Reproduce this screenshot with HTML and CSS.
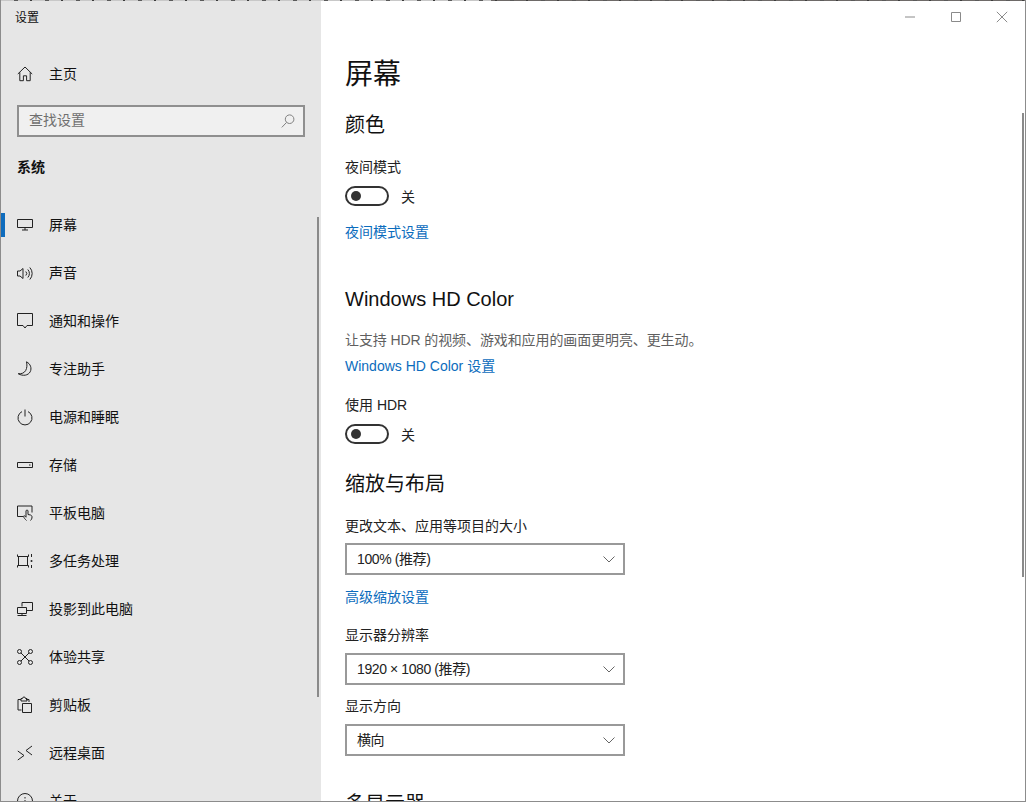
FILE: index.html
```html
<!DOCTYPE html>
<html lang="zh-CN">
<head>
<meta charset="utf-8">
<title>设置</title>
<link rel="stylesheet" href="styles.css">
</head>
<body>
<div class="window">
  <div class="topstrip"></div>
  <div class="body">
    <aside class="sidebar">
      <div class="apptitle">设置</div>
      <div class="nav home">
        <svg class="ico" viewBox="0 0 16 16"><path d="M.8 8 8 1l7.200 7M2.800 6.300v8.400h3.600V9.800h3.200v4.900h3.600V6.300"/></svg>
        <span>主页</span>
      </div>
      <div class="search">
        <span class="search-text">查找设置</span>
        <svg class="search-ico" viewBox="0 0 14 14"><circle cx="8.600" cy="5.200" r="4.300"/><path d="M5.600 8.400.8 13.400"/></svg>
      </div>
      <div class="group">系统</div>
      <nav class="navlist">
        <div class="nav active">
          <svg class="ico" viewBox="0 0 16 16"><path d="M.5 2.500h15v8H.5zM8 10.500v2.500M5 13h6"/></svg>
          <span>屏幕</span>
        </div>
        <div class="nav">
          <svg class="ico" viewBox="0 0 16 16"><path d="M.5 6h2.500L6 3.500v10L3 11H.5zM8.800 6.500a2.800 2.800 0 0 1 0 4M10.800 4.500a5.800 5.800 0 0 1 0 8M12.800 2.500a8.800 8.800 0 0 1 0 12"/></svg>
          <span>声音</span>
        </div>
        <div class="nav">
          <svg class="ico" viewBox="0 0 16 16"><path d="M.5.500h15v12h-5.500L8 15l-2-2.500H.5z"/></svg>
          <span>通知和操作</span>
        </div>
        <div class="nav">
          <svg class="ico" viewBox="0 0 16 16"><path d="M9.500.8c4 2 5.500 6.500 3.700 10-1.900 3.600-7.200 4.700-12 1.900 3.300.3 6-.6 7.500-3.200 1.400-2.500 1.500-5.800.8-8.700z"/></svg>
          <span>专注助手</span>
        </div>
        <div class="nav">
          <svg class="ico" viewBox="0 0 16 16"><path d="M8 .5v7M5 2.600a7 7 0 1 0 6 0"/></svg>
          <span>电源和睡眠</span>
        </div>
        <div class="nav">
          <svg class="ico" viewBox="0 0 16 16"><path d="M.5 5.500h15v5H.5zM12 8h1.500"/></svg>
          <span>存储</span>
        </div>
        <div class="nav">
          <svg class="ico" viewBox="0 0 16 16"><path d="M6 11.500H.5v-10.500h14.500v6.500M9.500 15.500C8 14 7 13 6.500 11.500c0-.8.8-1 1.500-.3l1 1V6c0-1.300 2-1.300 2 0v3.500l2.500.5c1 .3 1.500 1 1.500 2 0 1.500-.5 2.500-1.500 3.500"/></svg>
          <span>平板电脑</span>
        </div>
        <div class="nav">
          <svg class="ico" viewBox="0 0 16 16"><path d="M.5 1.500v2h11v-2M.5 14.500v-2h11v2M1.500 3.500v9M10.500 3.500v9M14.500 1v3M14.500 12v3"/><circle class="dot" cx="14.500" cy="8" r="1"/></svg>
          <span>多任务处理</span>
        </div>
        <div class="nav">
          <svg class="ico" viewBox="0 0 16 16"><path d="M5 5.500V1.500h10.500v8H9M.5 6.500h9v6h-9zM.5 14.500h9M5 12.500v2"/></svg>
          <span>投影到此电脑</span>
        </div>
        <div class="nav">
          <svg class="ico" viewBox="0 0 16 16"><circle cx="2.500" cy="2.500" r="2"/><circle cx="13.500" cy="2.500" r="2"/><circle cx="2.500" cy="13.500" r="2"/><circle cx="13.500" cy="13.500" r="2"/><path d="m4 4 8 8M12 4l-8 8"/></svg>
          <span>体验共享</span>
        </div>
        <div class="nav">
          <svg class="ico" viewBox="0 0 16 16"><path d="M4.500 13H1V2.500h3M9 2.500h3V5M4 1.500h1.500a1 1 0 0 1 3 0H10v2.500H4zM5.500 6.500h9v9h-9z"/></svg>
          <span>剪贴板</span>
        </div>
        <div class="nav">
          <svg class="ico" viewBox="0 0 16 16"><path d="m.8 6 6.200 4.500-6.200 4.500M15 1 9 5.500l6 4.500"/></svg>
          <span>远程桌面</span>
        </div>
        <div class="nav">
          <svg class="ico" viewBox="0 0 16 16"><circle cx="8" cy="8" r="7.500"/><path d="M8 7v5M8 4v1.500"/></svg>
          <span>关于</span>
        </div>
      </nav>
      <div class="scroll-side"></div>
    </aside>
    <main class="content">
      <div class="winctl">
        <svg viewBox="0 0 12 12"><path d="M1 6h10"/></svg>
        <svg viewBox="0 0 12 12"><path d="M1.500 1.500h9v9h-9z"/></svg>
        <svg viewBox="0 0 12 12"><path d="m.8.800 10.400 10.400M11.200.800.800 11.200"/></svg>
      </div>
      <h1 class="title">屏幕</h1>
      <h2 class="sec first">颜色</h2>
      <div class="label lab-night">夜间模式</div>
      <div class="toggle-row">
        <span class="toggle"><i></i></span><span class="toggle-text">关</span>
      </div>
      <a class="link link-night">夜间模式设置</a>
      <h2 class="sec hd">Windows HD Color</h2>
      <p class="label desc">让支持 HDR 的视频、游戏和应用的画面更明亮、更生动。</p>
      <a class="link link-hd">Windows HD Color 设置</a>
      <div class="label lab-hdr">使用 HDR</div>
      <div class="toggle-row">
        <span class="toggle"><i></i></span><span class="toggle-text">关</span>
      </div>
      <h2 class="sec scale">缩放与布局</h2>
      <div class="label lab-size">更改文本、应用等项目的大小</div>
      <div class="select sel-size"><span class="select-text">100% (推荐)</span><svg viewBox="0 0 12 7"><path d="m.5.500 5.500 5.500 5.500-5.500"/></svg></div>
      <a class="link link-adv">高级缩放设置</a>
      <div class="label lab-res">显示器分辨率</div>
      <div class="select sel-res"><span class="select-text">1920 × 1080 (推荐)</span><svg viewBox="0 0 12 7"><path d="m.5.500 5.500 5.500 5.500-5.500"/></svg></div>
      <div class="label lab-dir">显示方向</div>
      <div class="select sel-dir"><span class="select-text">横向</span><svg viewBox="0 0 12 7"><path d="m.5.500 5.500 5.500 5.500-5.500"/></svg></div>
      <h2 class="sec multi">多显示器</h2>
      <div class="scroll-main"></div>
    </main>
  </div>
</div>
</body>
</html>
```
FILE: styles.css
```css
* { box-sizing: border-box; }
html, body { margin: 0; padding: 0; background: #fff; }
body {
  width: 1026px;
  height: 802px;
  overflow: hidden;
  font-family: "Liberation Sans", "Noto Sans CJK SC", sans-serif;
  font-size: 14px;
  color: #1a1a1a;
}
.window {
  width: 1026px;
  height: 802px;
  display: flex;
  flex-direction: column;
  border-left: 1px solid #8c8c8c;
  border-right: 1px solid #8c8c8c;
  border-bottom: 1px solid #8c8c8c;
  overflow: hidden;
}
.topstrip {
  height: 1px;
  flex: none;
  background:
    repeating-linear-gradient(90deg, transparent 0 13px, #5a5a5a 13px 17px, transparent 17px 29px, #3c3c3c 29px 31px),
    linear-gradient(90deg, #c8c8c8 0 490px, #6e6a68 490px);
}
.body { flex: 1; display: flex; min-height: 0; }

.sidebar {
  position: relative;
  width: 320px;
  flex: none;
  background: #e6e6e6;
  overflow: hidden;
}
.apptitle { font-size: 12px; line-height: 16px; padding: 9px 0 0 14px; height: 49px; color: #111; }
.nav {
  height: 48px;
  display: flex;
  align-items: center;
  padding-left: 16px;
  gap: 16px;
  line-height: 20px;
  color: #111;
}
.ico { width: 16px; height: 16px; flex: none; overflow: visible; }
.ico path, .ico circle { fill: none; stroke: #222; stroke-width: 1; }
.ico .dot { fill: #222; stroke: none; }
.search {
  margin: 7px 0 0 16px;
  width: 288px;
  height: 32px;
  border: 2px solid #8f8f8f;
  background: #f0f0f0;
  display: flex;
  align-items: center;
  justify-content: space-between;
  padding: 0 8px 0 10px;
  color: #6f6f6f;
}
.search-text { margin-bottom: 4px; }
.search-ico { width: 14px; height: 14px; }
.search-ico circle, .search-ico path { fill: none; stroke: #808080; stroke-width: 1; }
.group { font-weight: 700; font-size: 14px; line-height: 20px; padding-left: 16px; margin-top: 20px; color: #111; }
.navlist { margin-top: 24px; }
.active { position: relative; }
.active::before {
  content: "";
  position: absolute;
  left: 0;
  top: 12px;
  width: 4px;
  height: 24px;
  background: #0f6cbd;
}
.scroll-side { position: absolute; left: 316px; top: 216px; width: 2px; height: 480px; background: #8a8a8a; }

.content { position: relative; flex: 1; padding-left: 24px; min-width: 0; overflow: hidden; background: #fff; }
.winctl {
  position: absolute;
  top: 10px;
  right: 17px;
  display: flex;
  gap: 34px;
}
.winctl svg { width: 12px; height: 12px; }
.winctl path { fill: none; stroke: #8a8a8a; stroke-width: 1; }
.title { margin: 54px 0 0; font-size: 28px; font-weight: 400; line-height: 40px; color: #111; }
.sec { margin: 0; font-size: 20px; font-weight: 400; line-height: 28px; color: #111; }
.sec.first { margin-top: 16px; }
.label { margin: 0; line-height: 20px; color: #222; }
.lab-night { margin-top: 18px; }
.toggle-row { display: flex; align-items: center; gap: 12px; height: 20px; margin-top: 9px; color: #222; line-height: 20px; }
.toggle-text { padding-top: 2px; }
.toggle {
  width: 44px;
  height: 20px;
  border: 2px solid #333;
  border-radius: 10px;
  display: flex;
  align-items: center;
  padding-left: 4px;
}
.toggle i { width: 10px; height: 10px; border-radius: 50%; background: #333; }
.link { display: block; line-height: 20px; color: #0b6cbd; }
.link-night { margin-top: 16px; }
.sec.hd { margin-top: 43px; }
.desc { margin-top: 17px; color: #5f5f5f; letter-spacing: -.1px; }
.link-hd { margin-top: 6px; }
.lab-hdr { margin-top: 19px; }
.sec.scale { margin-top: 26px; }
.lab-size { margin-top: 18px; }
.select {
  width: 280px;
  height: 32px;
  border: 2px solid #999;
  display: flex;
  align-items: center;
  justify-content: space-between;
  padding: 0 8px 0 10px;
  color: #222;
  background: #fff;
}
.select-text { margin-bottom: 2px; letter-spacing: -.4px; }
.select svg { width: 12px; height: 7px; }
.select path { fill: none; stroke: #666; stroke-width: 1; }
.sel-size { margin-top: 7px; }
.link-adv { margin-top: 12px; }
.lab-res { margin-top: 18px; }
.sel-res { margin-top: 8px; }
.lab-dir { margin-top: 11px; }
.sel-dir { margin-top: 8px; }
.sec.multi { margin-top: 34px; }
.scroll-main { position: absolute; right: 1px; top: 112px; width: 2px; height: 464px; background: #8a8a8a; }
```
